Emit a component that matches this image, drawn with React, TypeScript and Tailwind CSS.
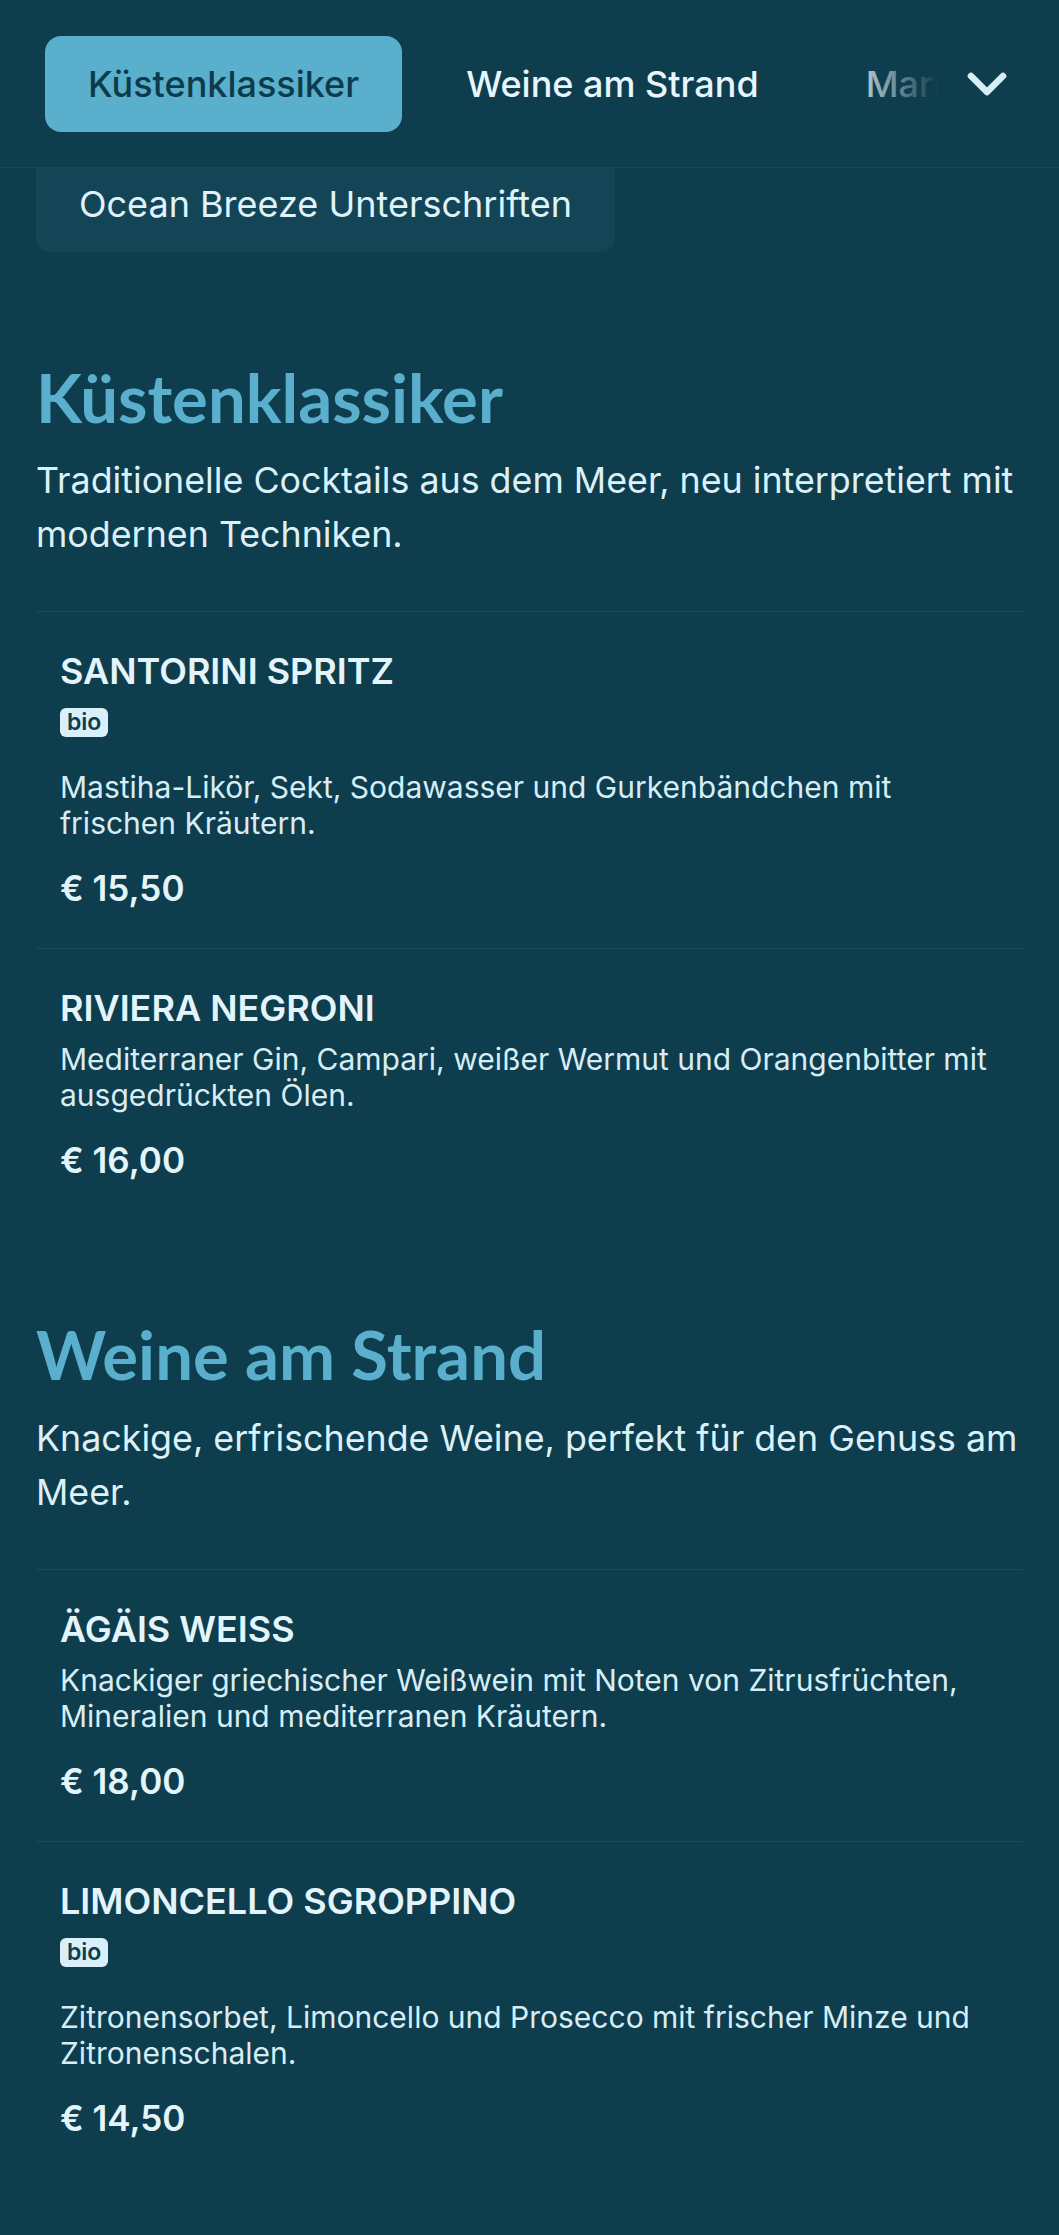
import { ChevronDown } from "lucide-react";

type Item = { name: string; bio?: boolean; desc: string; price: string };
type Section = { title: string; intro: string; items: Item[] };

const tabs = ["Küstenklassiker", "Weine am Strand", "Maritime Mocktails"];

const sections: Section[] = [
  {
    title: "Küstenklassiker",
    intro: "Traditionelle Cocktails aus dem Meer, neu interpretiert mit modernen Techniken.",
    items: [
      {
        name: "SANTORINI SPRITZ",
        bio: true,
        desc: "Mastiha-Likör, Sekt, Sodawasser und Gurkenbändchen mit frischen Kräutern.",
        price: "€ 15,50",
      },
      {
        name: "RIVIERA NEGRONI",
        desc: "Mediterraner Gin, Campari, weißer Wermut und Orangenbitter mit ausgedrückten Ölen.",
        price: "€ 16,00",
      },
    ],
  },
  {
    title: "Weine am Strand",
    intro: "Knackige, erfrischende Weine, perfekt für den Genuss am Meer.",
    items: [
      {
        name: "ÄGÄIS WEISS",
        desc: "Knackiger griechischer Weißwein mit Noten von Zitrusfrüchten, Mineralien und mediterranen Kräutern.",
        price: "€ 18,00",
      },
      {
        name: "LIMONCELLO SGROPPINO",
        bio: true,
        desc: "Zitronensorbet, Limoncello und Prosecco mit frischer Minze und Zitronenschalen.",
        price: "€ 14,50",
      },
    ],
  },
];

function MenuItem({ item }: { item: Item }) {
  return (
    <div className="border-t border-[#1b4a5b] px-[24px] pt-[39px] pb-[40px]">
      <h3 className="text-[36px] leading-[40px] font-semibold text-[#e3f4fb]">{item.name}</h3>
      {item.bio && (
        <div className="mt-[17px] flex">
          <span className="rounded-[6px] bg-[#d9f0fa] px-[7px] text-[23px] leading-[29px] font-semibold text-[#0e3d4e]">
            bio
          </span>
        </div>
      )}
      <p className={`${item.bio ? "mt-[32px]" : "mt-[13px]"} text-[30px] leading-[36px] text-[#d7edf6]`}>
        {item.desc}
      </p>
      <p className="mt-[27px] text-[35px] leading-[40px] font-semibold text-[#e3f4fb]">{item.price}</p>
    </div>
  );
}

export default function App() {
  return (
    <div className="min-h-screen bg-[#0e3d4e] pb-[58px] font-[Inter,sans-serif]">
      <header className="relative overflow-hidden border-b border-[#174759]">
        <nav className="flex gap-[21px] pl-[45px] pt-[36px] pb-[35px]">
          {tabs.map((t, i) => (
            <button
              key={t}
              className={`h-[96px] shrink-0 whitespace-nowrap rounded-[16px] px-[43px] text-[36px] font-medium ${
                i === 0 ? "bg-[#5aafcc] text-[#0d3b4b]" : "text-[#e6f6fc]"
              }`}
            >
              {t}
            </button>
          ))}
        </nav>
        <div className="absolute top-0 right-0 flex h-full w-[219px] items-center justify-end bg-linear-to-r from-transparent via-[#0e3d4e] via-45% to-[#0e3d4e] pr-[40px]">
          <ChevronDown size={64} strokeWidth={2.5} className="text-[#d8eef7]" />
        </div>
      </header>

      <div className="px-[36px] pb-[11px]">
        <div className="h-[84px] w-fit overflow-hidden">
          <button className="-mt-[12px] h-[96px] whitespace-nowrap rounded-[14px] bg-[#134556] px-[43px] text-[36px] font-normal text-[#e0f3fb]">
            Ocean Breeze Unterschriften
          </button>
        </div>
      </div>

      {sections.map((s) => (
        <section key={s.title} className="mt-[94px] px-[36px]">
          <h2 className="font-[Lato,sans-serif] text-[67px] leading-[1.2] font-bold text-[#5aafcc]">{s.title}</h2>
          <p className="mt-[16px] text-[35.8px] leading-[54px] text-[#dcf0f8]">{s.intro}</p>
          <div className="mt-[50px]">
            {s.items.map((it) => (
              <MenuItem key={it.name} item={it} />
            ))}
          </div>
        </section>
      ))}
    </div>
  );
}
